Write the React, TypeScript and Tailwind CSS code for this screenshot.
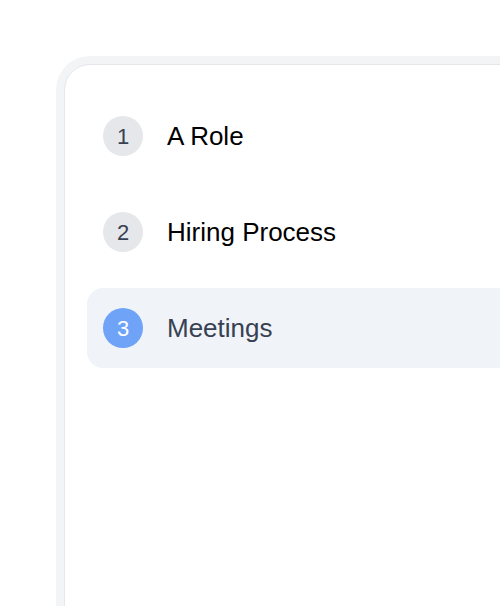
import React from "react";

const items = [
  { n: 1, label: "A Role", active: false },
  { n: 2, label: "Hiring Process", active: false },
  { n: 3, label: "Meetings", active: true },
];

export default function App() {
  return (
    <div
      className="w-[500px] h-[606px] overflow-hidden bg-white pl-[56px] pt-[56px]"
      style={{ fontFamily: '"Liberation Sans", Arial, sans-serif' }}
    >
      <div className="w-[600px] h-[700px] rounded-[34px] bg-[#f3f4f6] p-[8px]">
        <div className="h-full rounded-[26px] border border-[#e5e7eb] bg-white pl-[22px] pt-[31px] flex flex-col gap-[16px]">
          {items.map((it) => (
            <div
              key={it.n}
              className={
                "h-[80px] flex items-center pl-[16px] gap-[24px] rounded-[16px] " +
                (it.active ? "bg-[#f0f4f9]" : "")
              }
            >
              <div
                className={
                  "w-[40px] h-[40px] rounded-full flex items-center justify-center text-[22px] " +
                  (it.active ? "bg-[#6ea3f7] text-white" : "bg-[#e5e7eb] text-[#374151]")
                }
              >
                {it.n}
              </div>
              <div className={"text-[26px] " + (it.active ? "text-[#374151]" : "text-black")}>
                {it.label}
              </div>
            </div>
          ))}
        </div>
      </div>
    </div>
  );
}
